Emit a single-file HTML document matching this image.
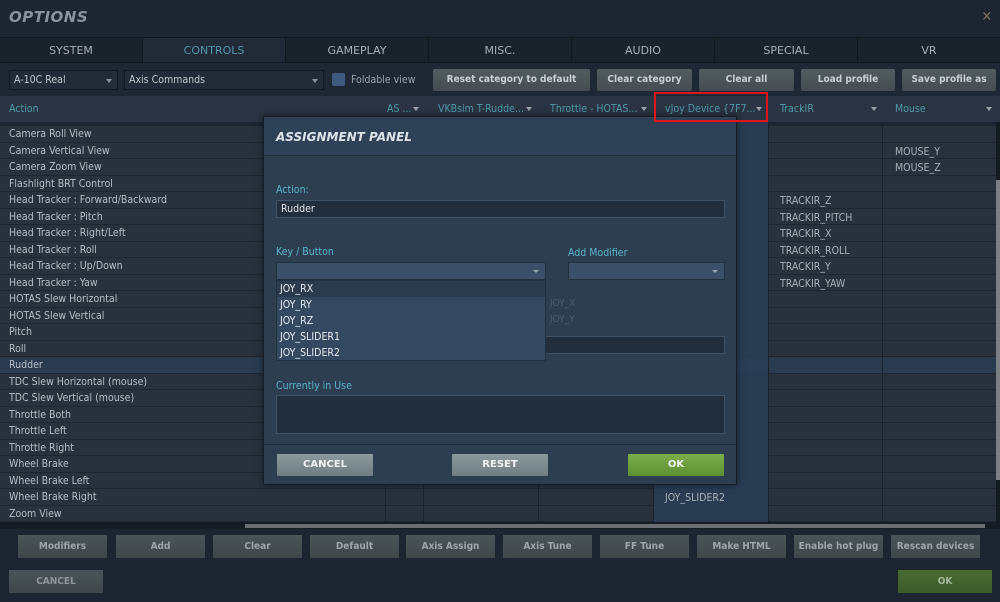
<!DOCTYPE html>
<html><head><meta charset="utf-8"><style>
*{box-sizing:border-box;margin:0;padding:0}
body{width:1000px;height:602px;overflow:hidden;background:#1d2530;font-family:"DejaVu Sans Condensed","DejaVu Sans","Liberation Sans",sans-serif;color:#b8c0c8;position:relative}
.a{position:absolute}
.title{left:9px;top:8px;font:italic bold 15px "DejaVu Sans",sans-serif;color:#8a939c;letter-spacing:.5px}
.tabs{left:0;top:37px;width:1000px;height:26px;background:#1a222c;border-top:1px solid #121820;border-bottom:1px solid #121820;display:flex}
.tab{flex:1;text-align:center;font-size:11px;line-height:25px;color:#a7afb7;border-right:1px solid #121820;font-family:"DejaVu Sans",sans-serif}
.tab.on{background:#202b37;color:#4f97a8}
.sel{height:20px;background:#222c38;border:1px solid #121820;font-size:10.5px;line-height:18px;padding-left:4px;color:#c0c6cc}
.sel:after{content:"";position:absolute;right:5px;top:8px;border:3px solid transparent;border-top:4px solid #8a929a}
.btn{height:22px;background:linear-gradient(#525b5f,#454d52);border-radius:2px;font-weight:bold;font-size:10px;color:#c9cfd3;text-align:center;line-height:22px}
.hdr{left:0;top:96px;width:1000px;height:26px;background:#2a3442;font-size:10.5px;color:#4f97a8;line-height:26px}
.hdr span{position:absolute}
.arr{position:absolute;border:3px solid transparent;border-top:4px solid #9aa2aa;top:11px}
.tbl{left:0;top:126px;width:996px;height:396px;background:#28313c}
.row{height:16.5px;border-bottom:1px solid #1f262f;font-size:10.5px;line-height:17px;padding-left:9px;color:#b8bfc6;position:relative;white-space:nowrap}
.col{position:absolute;top:122px;height:400px;border-left:1px solid #1c232c}
.cell{position:absolute;font-size:10.5px;color:#a9b0b7}
.modal{left:263px;top:116px;width:474px;height:369px;background:#2e3e51;border:1px solid #161d26;box-shadow:0 0 6px #0008}
.mh{height:39px;background:#2f4156;border-bottom:1px solid #1f2a37;font:italic bold 12px "DejaVu Sans",sans-serif;color:#dde3e8;padding:13px 0 0 12px}
.lbl{font-size:10.5px;color:#59b3c9}
.inp{background:#222e3c;border:1px solid #3f5266;height:18px;font-size:10.5px;color:#dfe4e8;padding-left:4px;line-height:16px}
.dd{background:#3b5068;border:1px solid #23303e;height:18px}
.dd:after{content:"";position:absolute;right:6px;top:7px;border:3px solid transparent;border-top:3px solid #9aa7b3}
.li{height:16px;font-size:10.5px;line-height:16px;padding-left:3px;color:#e6eaee}
.mb{height:22px;background:linear-gradient(#8c9a9e,#6f7d82);font-weight:bold;font-size:10px;color:#f0f2f3;text-align:center;line-height:22px;border-radius:1px;font-family:"DejaVu Sans",sans-serif}
.bb{top:535px;width:89px;height:23px;background:linear-gradient(#4a5357,#3f474b);font-weight:bold;font-size:10px;color:#9ea6ab;text-align:center;line-height:23px}
</style></head><body>
<div class="a title">OPTIONS</div>
<div class="a" style="right:8px;top:9px;color:#7d6e58;font-size:14px">✕</div>
<div class="a tabs"><div class="tab">SYSTEM</div><div class="tab on">CONTROLS</div><div class="tab">GAMEPLAY</div><div class="tab">MISC.</div><div class="tab">AUDIO</div><div class="tab">SPECIAL</div><div class="tab" style="border:0">VR</div></div>
<div class="a" style="left:0;top:63px;width:1000px;height:33px;background:#1e2834"></div>
<div class="a sel" style="left:9px;top:70px;width:109px">A-10C Real</div>
<div class="a sel" style="left:124px;top:70px;width:200px">Axis Commands</div>
<div class="a" style="left:332px;top:73px;width:13px;height:13px;background:#3e5a7e;border-radius:2px"></div>
<div class="a" style="left:351px;top:74px;font-size:10.5px;color:#9aa2aa">Foldable view</div>
<div class="a btn" style="left:433px;top:69px;width:157px">Reset category to default</div>
<div class="a btn" style="left:597px;top:69px;width:95px">Clear category</div>
<div class="a btn" style="left:699px;top:69px;width:95px">Clear all</div>
<div class="a btn" style="left:801px;top:69px;width:94px">Load profile</div>
<div class="a btn" style="left:902px;top:69px;width:94px">Save profile as</div>
<div class="a hdr"><span style="left:9px">Action</span><span style="left:387px">AS ...</span><i class="arr" style="left:413px"></i>
<span style="left:438px">VKBsim T-Rudde...</span><i class="arr" style="left:526px"></i>
<span style="left:550px">Throttle - HOTAS...</span><i class="arr" style="left:641px"></i>
<span style="left:665px">vJoy Device {7F7...</span><i class="arr" style="left:756px"></i>
<span style="left:780px">TrackIR</span><i class="arr" style="left:871px"></i>
<span style="left:895px">Mouse</span><i class="arr" style="left:986px"></i></div>
<div class="a tbl">
<div class="row">Camera Roll View</div><div class="row">Camera Vertical View</div><div class="row">Camera Zoom View</div><div class="row">Flashlight BRT Control</div><div class="row">Head Tracker : Forward/Backward</div><div class="row">Head Tracker : Pitch</div><div class="row">Head Tracker : Right/Left</div><div class="row">Head Tracker : Roll</div><div class="row">Head Tracker : Up/Down</div><div class="row">Head Tracker : Yaw</div><div class="row">HOTAS Slew Horizontal</div><div class="row">HOTAS Slew Vertical</div><div class="row">Pitch</div><div class="row">Roll</div><div class="row" style="background:#2a3b50">Rudder</div><div class="row">TDC Slew Horizontal (mouse)</div><div class="row">TDC Slew Vertical (mouse)</div><div class="row">Throttle Both</div><div class="row">Throttle Left</div><div class="row">Throttle Right</div><div class="row">Wheel Brake</div><div class="row">Wheel Brake Left</div><div class="row">Wheel Brake Right</div><div class="row">Zoom View</div>
</div>
<div class="a" style="left:653px;top:122px;width:115px;height:400px;background:#2a3e56;opacity:.85"></div>
<div class="a col" style="left:385px"></div><div class="a col" style="left:423px"></div><div class="a col" style="left:538px"></div><div class="a col" style="left:653px"></div><div class="a col" style="left:768px"></div><div class="a col" style="left:882px"></div>
<div class="a" style="left:996px;top:122px;width:4px;height:400px;background:#151b22"></div>
<div class="a" style="left:996px;top:180px;width:4px;height:300px;background:#7a7f84"></div>
<div class="a cell" style="left:895px;top:146px">MOUSE_Y</div><div class="a cell" style="left:895px;top:162px">MOUSE_Z</div>
<div class="a cell" style="left:780px;top:195px">TRACKIR_Z</div><div class="a cell" style="left:780px;top:212px">TRACKIR_PITCH</div><div class="a cell" style="left:780px;top:228px">TRACKIR_X</div><div class="a cell" style="left:780px;top:245px">TRACKIR_ROLL</div><div class="a cell" style="left:780px;top:261px">TRACKIR_Y</div><div class="a cell" style="left:780px;top:278px">TRACKIR_YAW</div>
<div class="a cell" style="left:665px;top:492px">JOY_SLIDER2</div>
<div class="a" style="left:0;top:522px;width:1000px;height:7px;background:#161c23"></div>
<div class="a" style="left:245px;top:524px;width:740px;height:4px;background:#6a6f74"></div>
<div class="a bb" style="left:18px">Modifiers</div><div class="a bb" style="left:116px">Add</div><div class="a bb" style="left:213px">Clear</div><div class="a bb" style="left:310px">Default</div><div class="a bb" style="left:406px">Axis Assign</div><div class="a bb" style="left:503px">Axis Tune</div><div class="a bb" style="left:600px">FF Tune</div><div class="a bb" style="left:697px">Make HTML</div><div class="a bb" style="left:794px">Enable hot plug</div><div class="a bb" style="left:891px">Rescan devices</div>
<div class="a bb" style="left:9px;top:570px;width:94px;height:23px;color:#8f979c">CANCEL</div>
<div class="a bb" style="left:898px;top:570px;width:94px;height:23px;background:linear-gradient(#4a6a33,#3d5a2a);color:#a9b8a0">OK</div>
<div class="a modal">
<div class="mh">ASSIGNMENT PANEL</div>
<div class="a lbl" style="left:12px;top:67px">Action:</div>
<div class="a inp" style="left:12px;top:83px;width:449px">Rudder</div>
<div class="a lbl" style="left:12px;top:129px">Key / Button</div>
<div class="a lbl" style="left:304px;top:130px">Add Modifier</div>
<div class="a dd" style="left:12px;top:145px;width:270px"></div>
<div class="a dd" style="left:304px;top:145px;width:157px"></div>
<div class="a" style="left:286px;top:181px;font-size:10px;color:#4a5d70">JOY_X</div>
<div class="a" style="left:286px;top:197px;font-size:10px;color:#4a5d70">JOY_Y</div>
<div class="a inp" style="left:12px;top:219px;width:449px;height:18px"></div>
<div class="a lbl" style="left:12px;top:263px">Currently in Use</div>
<div class="a inp" style="left:12px;top:278px;width:449px;height:39px"></div>
<div class="a" style="left:0;top:327px;width:472px;height:1px;background:#1f2a37"></div>
<div class="a mb" style="left:13px;top:337px;width:96px">CANCEL</div>
<div class="a mb" style="left:188px;top:337px;width:96px">RESET</div>
<div class="a mb" style="left:364px;top:337px;width:96px;background:linear-gradient(#7cad4a,#5e8f33)">OK</div>
<div class="a" style="left:12px;top:163px;width:270px;height:81px;background:#34495f;border:1px solid #23303e">
<div class="li" style="background:#2b3a4c">JOY_RX</div><div class="li">JOY_RY</div><div class="li">JOY_RZ</div><div class="li">JOY_SLIDER1</div><div class="li">JOY_SLIDER2</div></div>
</div>
<div class="a" style="left:654px;top:92px;width:114px;height:30px;border:2px solid #e0141a"></div>
</body></html>
